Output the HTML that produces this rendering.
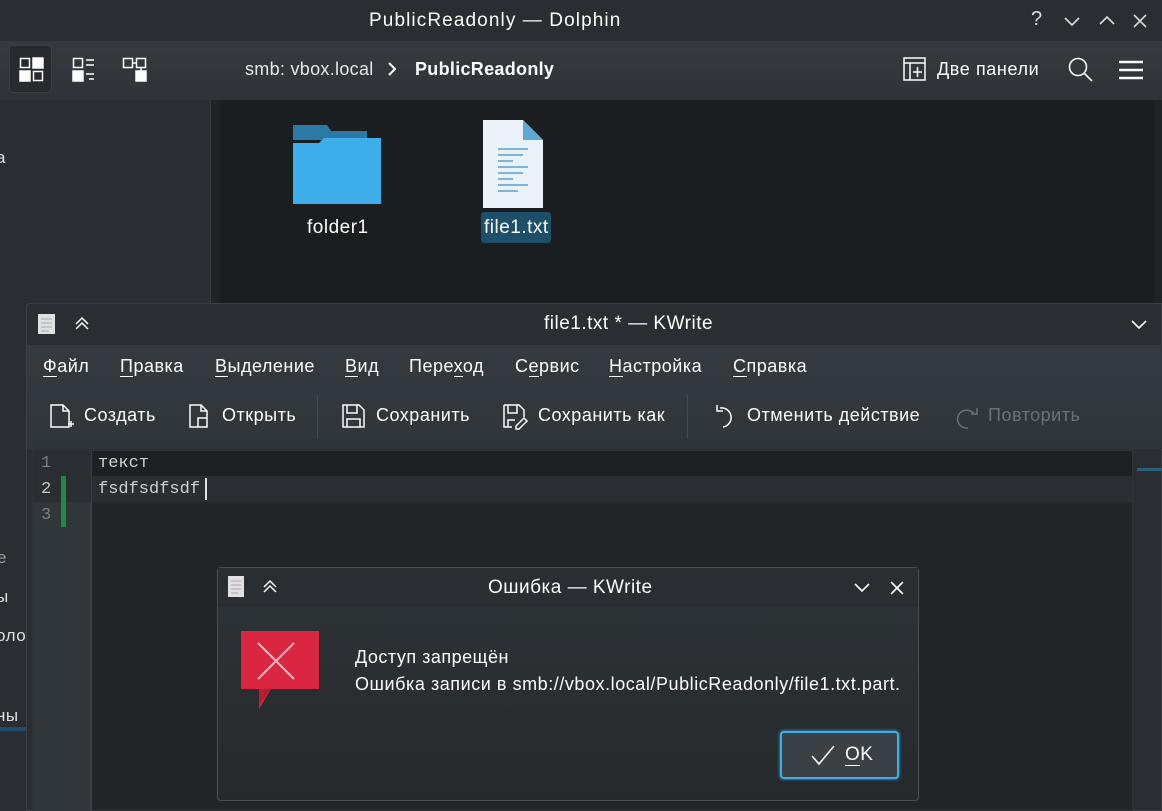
<!DOCTYPE html>
<html><head><meta charset="utf-8"><style>
*{margin:0;padding:0;box-sizing:border-box}
body{width:1162px;height:811px;overflow:hidden;background:#202326;font-family:"Liberation Sans","DejaVu Sans",sans-serif;color:#fcfcfc;position:relative;font-size:17px}
.a{position:absolute}
.t{position:absolute;white-space:nowrap;letter-spacing:0.5px}
u{text-decoration:none;border-bottom:1px solid #fcfcfc}
</style></head><body>
<!-- Dolphin -->
<div class="a" style="left:0;top:0;width:1162px;height:41px;background:#2a2e32"></div>
<div class="t" style="left:369px;top:10px;font-size:19px;letter-spacing:1.1px">PublicReadonly — Dolphin</div>
<div class="t" style="left:1031px;top:8px;font-size:20px;color:#dcdcdc">?</div>
<svg class="a" style="left:1062px;top:12px" width="90" height="18" fill="none" stroke="#dcdcdc" stroke-width="1.6"><path d="M3 6l7 7 7-7"/><path d="M38 12l7-7 7 7"/><path d="M72 3l12 12M84 3L72 15"/></svg>
<div class="a" style="left:0;top:41px;width:1162px;height:59px;background:linear-gradient(#353a3f,#2f3338)"></div>
<div class="a" style="left:9px;top:45px;width:43px;height:48px;border-radius:4px;background:#272b2f;border:1px solid #3a3f44"></div>
<svg class="a" style="left:19px;top:57px" width="140" height="26" fill="none" stroke="#fcfcfc" stroke-width="1.5">
<rect x="1.5" y="1.5" width="9" height="9"/><rect x="14" y="1" width="10" height="10" fill="#fcfcfc"/><rect x="1" y="14" width="10" height="10" fill="#fcfcfc"/><rect x="14.5" y="14.5" width="9" height="9"/>
<rect x="54.5" y="1.5" width="9" height="9"/><path d="M67 3h8M67 8h8M67 17h8M70 22h5"/><rect x="54" y="14" width="10" height="10" fill="#fcfcfc"/>
<rect x="104.5" y="1.5" width="9" height="9"/><rect x="117.5" y="1.5" width="9" height="9"/><rect x="117" y="14" width="10" height="10" fill="#fcfcfc"/><path d="M113 6h4M122 11v3"/></svg>
<div class="t" style="left:245px;top:59px;font-size:18px;letter-spacing:0.3px;color:#e8e8e8">smb: vbox.local</div>
<svg class="a" style="left:386px;top:61px" width="12" height="16" fill="none" stroke="#fcfcfc" stroke-width="2"><path d="M3 2l6 6-6 6"/></svg>
<div class="t" style="left:415px;top:59px;font-size:18px;letter-spacing:0.3px;font-weight:bold">PublicReadonly</div>
<svg class="a" style="left:903px;top:57px" width="24" height="26" fill="none" stroke="#fcfcfc" stroke-width="1.5"><rect x="1" y="1" width="21" height="22"/><path d="M1 6h21M7 6v17M10 15h9M14.5 10v10"/></svg>
<div class="t" style="left:937px;top:59px;font-size:18px;letter-spacing:0.6px">Две панели</div>
<svg class="a" style="left:1068px;top:57px" width="26" height="26" fill="none" stroke="#fcfcfc" stroke-width="1.6"><circle cx="10" cy="10" r="8.5"/><path d="M16 16l8 8"/></svg>
<svg class="a" style="left:1118px;top:59px" width="26" height="22" stroke="#fcfcfc" stroke-width="2.5"><path d="M1 3h24M1 11h24M1 19h24"/></svg>
<div class="a" style="left:0;top:100px;width:211px;height:711px;background:#2a2e32;border-right:1px solid #353a3f"></div>
<div class="t" style="left:-4px;top:148px;color:#e0e0e0">а</div>
<div class="t" style="left:-3px;top:548px;color:#9a9a9a">е</div>
<div class="t" style="left:-4px;top:587px;color:#e0e0e0">ы</div>
<div class="t" style="left:-4px;top:626px;color:#e0e0e0">оло</div>
<div class="t" style="left:-4px;top:706px;color:#e0e0e0">ны</div>
<div class="a" style="left:0;top:727px;width:27px;height:4px;background:#1d4d6a"></div>
<div class="a" style="left:220px;top:100px;width:935px;height:210px;background:#1b1e20"></div>
<svg class="a" style="left:292px;top:124px" width="90" height="80"><path d="M1 1h34l4 6h36v9H1z" fill="#2a7aa5"/><path d="M1 19h26l5-5h57v68H1z" fill="#3daee9"/></svg>
<div class="t" style="left:307px;top:217px;font-size:19px">folder1</div>
<svg class="a" style="left:483px;top:120px" width="66" height="88"><path d="M0 0h40l20 20v68H0z" fill="#e8f2f8"/><path d="M40 0l20 20H40z" fill="#5ea9d6"/><path d="M15 29h30M15 35h25M15 41h15M15 47h30M15 53h25M15 59h15M15 65h30M15 71h20" stroke="#3d8fc6" stroke-width="1.3"/></svg>
<div class="a" style="left:481px;top:212px;width:70px;height:31px;background:#1d4f69;border-radius:3px"></div>
<div class="t" style="left:484px;top:217px;font-size:19px">file1.txt</div>
<!-- KWrite -->
<div class="a" style="left:26px;top:303px;width:1136px;height:508px;background:#2a2e32;border:1px solid #3b4045;border-radius:4px 0 0 0"></div>
<svg class="a" style="left:37px;top:313px" width="60" height="22"><rect x="1" y="1" width="17" height="20" fill="#e0e0e0"/><path d="M4 6h11M4 10h11M4 14h11M4 18h8" stroke="#aaa"/><path d="M39 11l6-6 6 6M39 16l6-6 6 6" fill="none" stroke="#fcfcfc" stroke-width="1.5"/></svg>
<div class="t" style="left:544px;top:313px;font-size:19px">file1.txt * — KWrite</div>
<svg class="a" style="left:1130px;top:318px" width="18" height="14" fill="none" stroke="#fcfcfc" stroke-width="1.6"><path d="M2 3l7 7 7-7"/></svg>
<div class="a" style="left:27px;top:345px;width:1135px;height:104px;background:linear-gradient(#343a40,#30353a)"></div>
<div class="t" style="left:43px;top:356px;font-size:18px"><u>Ф</u>айл</div>
<div class="t" style="left:120px;top:356px;font-size:18px"><u>П</u>равка</div>
<div class="t" style="left:215px;top:356px;font-size:18px"><u>В</u>ыделение</div>
<div class="t" style="left:345px;top:356px;font-size:18px"><u>В</u>ид</div>
<div class="t" style="left:409px;top:356px;font-size:18px">Пере<u>х</u>од</div>
<div class="t" style="left:515px;top:356px;font-size:18px">С<u>е</u>рвис</div>
<div class="t" style="left:609px;top:356px;font-size:18px"><u>Н</u>астройка</div>
<div class="t" style="left:733px;top:356px;font-size:18px"><u>С</u>правка</div>
<svg class="a" style="left:48px;top:402px" width="940" height="28" fill="none" stroke="#fcfcfc" stroke-width="1.5">
<path d="M3 3h12l6 6v16H3z M15 3v6h6M20 22h6M23 19v6"/>
<path d="M142 3h11l6 6v16h-17z M153 3v6h6M150 16h9v9h-9z"/>
<path d="M295 3h16l5 5v17h-21z M299 3v8h10V3M299 25v-8h13v8"/>
<path d="M456 3h15l5 5v7M456 3v22h8M460 3v8h9V3M460 25v-7h7M468 24l8-8 3 3-8 8h-3z"/>
<path d="M672 6a9 9 0 1 1 3 19M669 3v6h6"/>
<path d="M926 12a9 9 0 1 0-6 14M929 6v6h-6" stroke="#6e7275"/>
</svg>
<div class="a" style="left:317px;top:395px;width:1px;height:44px;background:#444a50"></div>
<div class="a" style="left:687px;top:395px;width:1px;height:44px;background:#444a50"></div>
<div class="t" style="left:84px;top:405px;font-size:18px">Создать</div>
<div class="t" style="left:222px;top:405px;font-size:18px">Открыть</div>
<div class="t" style="left:376px;top:405px;font-size:18px">Сохранить</div>
<div class="t" style="left:538px;top:405px;font-size:18px">Сохранить как</div>
<div class="t" style="left:747px;top:405px;font-size:18px">Отменить действие</div>
<div class="t" style="left:988px;top:405px;font-size:18px;color:#6e7275">Повторить</div>
<div class="a" style="left:32px;top:450px;width:1101px;height:361px;background:#232629;border:1px solid #2f3337"></div>
<div class="a" style="left:33px;top:451px;width:58px;height:360px;background:#31363b;border-right:1px solid #3a3f44"></div>
<div class="a" style="left:33px;top:451px;width:1099px;height:25px;background:#1e2124"></div>
<div class="a" style="left:33px;top:476px;width:1099px;height:26px;background:#2a2e32"></div>
<div class="a" style="left:33px;top:451px;width:58px;height:51px;background:#2a2e32"></div>
<div class="a" style="left:91px;top:451px;width:1px;height:360px;background:#3a3f44"></div>
<div class="a" style="left:61px;top:476px;width:5px;height:51px;background:#1f8a43"></div>
<div class="t" style="left:41px;top:454px;font-family:'Liberation Mono',monospace;font-size:17px;color:#7a7e81;letter-spacing:0">1</div>
<div class="t" style="left:41px;top:480px;font-family:'Liberation Mono',monospace;font-size:17px;color:#c8c8c8;letter-spacing:0">2</div>
<div class="t" style="left:41px;top:506px;font-family:'Liberation Mono',monospace;font-size:17px;color:#7a7e81;letter-spacing:0">3</div>
<div class="t" style="left:98px;top:454px;font-family:'Liberation Mono',monospace;font-size:17px;color:#d0d0d0;letter-spacing:0">текст</div>
<div class="t" style="left:98px;top:480px;font-family:'Liberation Mono',monospace;font-size:17px;color:#d0d0d0;letter-spacing:0">fsdfsdfsdf</div>
<div class="a" style="left:205px;top:478px;width:2px;height:22px;background:#e0e0e0"></div>
<div class="a" style="left:1137px;top:468px;width:25px;height:3px;background:#2a5f7a"></div>
<!-- Dialog -->
<div class="a" style="left:217px;top:567px;width:702px;height:234px;background:linear-gradient(#2f3438,#25292c);border:1px solid #4a4f54;border-radius:4px"></div>
<div class="a" style="left:218px;top:568px;width:700px;height:39px;background:#2a2e32"></div>
<svg class="a" style="left:227px;top:575px" width="60" height="24"><rect x="1" y="1" width="16" height="21" fill="#e0e0e0"/><path d="M4 6h10M4 10h10M4 14h10M4 18h7" stroke="#aaa"/><path d="M37 12l6-6 6 6M37 17l6-6 6 6" fill="none" stroke="#fcfcfc" stroke-width="1.5"/></svg>
<div class="t" style="left:488px;top:577px;font-size:19px">Ошибка — KWrite</div>
<svg class="a" style="left:853px;top:580px" width="55" height="16" fill="none" stroke="#fcfcfc" stroke-width="1.6"><path d="M2 4l7 7 7-7"/><path d="M38 2l12 12M50 2L38 14"/></svg>
<svg class="a" style="left:241px;top:631px" width="80" height="80"><path d="M0 0h78v58H30L18 78V58H0z" fill="#da2640"/><path d="M18 58h12L18 74z" fill="#b81c32"/><path d="M17 12l36 36M53 12L17 48" stroke="#f4b6be" stroke-width="2"/></svg>
<div class="t" style="left:355px;top:647px;font-size:18px">Доступ запрещён</div>
<div class="t" style="left:355px;top:674px;font-size:18px;letter-spacing:0.55px">Ошибка записи в smb://vbox.local/PublicReadonly/file1.txt.part.</div>
<div class="a" style="left:780px;top:731px;width:119px;height:48px;border:2px solid #3daee9;border-radius:4px;background:#3a4046;box-shadow:0 0 3px #3daee9"></div>
<svg class="a" style="left:810px;top:744px" width="26" height="22" fill="none" stroke="#fcfcfc" stroke-width="1.6"><path d="M2 12l7 8L24 2"/></svg>
<div class="t" style="left:845px;top:744px;font-size:19px"><u>O</u>K</div>
</body></html>
